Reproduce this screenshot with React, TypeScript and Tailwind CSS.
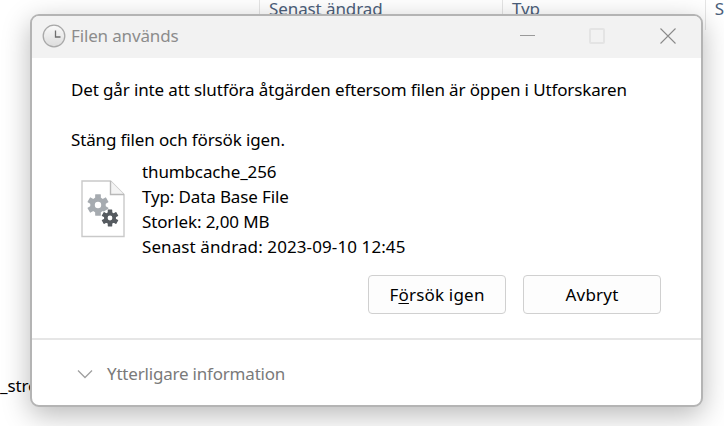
import React from "react";

function ClockIcon() {
  return (
    <svg width="24" height="24" viewBox="0 0 24 24" className="shrink-0">
      <defs>
        <linearGradient id="clockFace" x1="0" y1="0" x2="0" y2="1">
          <stop offset="0" stopColor="#fafafa" />
          <stop offset="1" stopColor="#dcdcdc" />
        </linearGradient>
      </defs>
      <circle cx="12" cy="12" r="10.8" fill="url(#clockFace)" stroke="#a8a8a8" strokeWidth="1.3" />
      <path d="M13.5 6.5V13H18.5" fill="none" stroke="#6e6e6e" strokeWidth="1.3" />
    </svg>
  );
}

const gear = (cx: number, cy: number, r: number) => {
  const teeth = [];
  for (let i = 0; i < 6; i++) {
    teeth.push(
      <rect
        key={i}
        x={cx - r * 0.3}
        y={cy - r * 1.12}
        width={r * 0.6}
        height={r * 0.6}
        rx="0.4"
        transform={`rotate(${i * 60} ${cx} ${cy})`}
      />
    );
  }
  return teeth;
};

function FileIcon() {
  return (
    <svg width="44" height="58" viewBox="0 0 44 58" className="shrink-0">
      <path d="M1 1H29.5L43 14.5V56.5H1Z" fill="#ffffff" stroke="#c9c9c9" strokeWidth="1.4" />
      <path d="M29.5 1V14.5H43" fill="#f4f4f4" stroke="#b9b9b9" strokeWidth="1.4" />
      <g fill="#a6abb0">
        {gear(17, 25, 9.5)}
        <circle cx="17" cy="25" r="7.8" />
      </g>
      <circle cx="17" cy="25" r="3.2" fill="#ffffff" />
      <circle cx="29" cy="38" r="9" fill="#ffffff" />
      <g fill="#565b60">
        {gear(29, 38, 7.5)}
        <circle cx="29" cy="38" r="6" />
      </g>
      <circle cx="29" cy="38" r="2.4" fill="#ffffff" />
    </svg>
  );
}

export default function App() {
  return (
    <div
      className="relative h-[426px] w-[724px] overflow-hidden bg-white text-[#000000]"
      style={{ fontFamily: '"Noto Sans", "Open Sans", sans-serif' }}
    >
      {/* Explorer column headers behind the dialog */}
      <div className="flex h-[30px] pl-[259px] text-[17px] leading-[20px] tracking-[-0.1px] text-[#4c607a]">
        <div className="w-[243px] border-l border-[#e5e5e5] pl-[9px]">
          <div className="-mt-[1px]">Senast ändrad</div>
        </div>
        <div className="w-[203px] border-l border-[#e5e5e5] pl-[9px]">
          <div className="-mt-[1px]">Typ</div>
        </div>
        <div className="flex-1 border-l border-[#e5e5e5] pl-[9px]">
          <div className="-mt-[1px]">S</div>
        </div>
      </div>
      <div className="absolute left-0 top-[376px] text-[17px] leading-[20px] tracking-[-0.1px]">_stre</div>

      {/* Dialog */}
      <div className="absolute left-[30px] top-[14px] flex h-[393px] w-[673px] flex-col overflow-hidden rounded-[9px] border-2 border-[#b4b4b4] bg-white shadow-[0_8px_28px_rgba(0,0,0,0.28)]">
        {/* Title bar */}
        <div className="flex h-[42px] shrink-0 items-center bg-[#f2f2f2] pb-[3px] pl-[10px]">
          <ClockIcon />
          <span className="ml-[5px] text-[17px] tracking-[-0.15px] text-[#8c8c8c]">Filen används</span>
          <div className="ml-auto flex items-center pr-[25px]">
            <div className="h-[1px] w-[15px] bg-[#9a9a9a]" />
            <div className="ml-[54px] h-[16px] w-[16px] rounded-[2px] border-2 border-[#e4e4e4]" />
            <svg width="16" height="16" viewBox="0 0 16 16" className="ml-[55px]">
              <path d="M.5.5 15.5 15.5M15.5.5.5 15.5" stroke="#8a8a8a" strokeWidth="1.1" fill="none" />
            </svg>
          </div>
        </div>

        {/* Body */}
        <div className="flex-1 px-[39px] pt-[19px] text-[17px] leading-[25px] tracking-[-0.13px]">
          <p>Det går inte att slutföra åtgärden eftersom filen är öppen i Utforskaren</p>
          <p className="mt-[25px]">Stäng filen och försök igen.</p>
          <div className="mt-[7px] flex items-center">
            <div className="ml-[10px] mr-[17px] flex items-center">
              <FileIcon />
            </div>
            <div>
              <div>thumbcache_256</div>
              <div>Typ: Data Base File</div>
              <div>Storlek: 2,00 MB</div>
              <div className="tracking-[0.1px]">Senast ändrad: 2023-09-10 12:45</div>
            </div>
          </div>
          <div className="mt-[16px] flex justify-end gap-[17px] pr-[1px]">
            <button className="h-[39px] w-[138px] rounded-[4px] border border-[#d0d0d0] bg-[#fdfdfd] text-[17px] tracking-[0.2px]">
              F<span className="underline underline-offset-2">ö</span>rsök igen
            </button>
            <button className="h-[39px] w-[138px] rounded-[4px] border border-[#d0d0d0] bg-[#fdfdfd] text-[17px] tracking-[0.2px]">
              Avbryt
            </button>
          </div>
        </div>

        {/* Footer */}
        <div className="flex h-[67px] shrink-0 items-center border-t-2 border-[#e6e6e6] pl-[45px] pt-[3px]">
          <svg width="16" height="10" viewBox="0 0 16 10" className="shrink-0">
            <path d="M1 1.5 8 8.5 15 1.5" fill="none" stroke="#a0a0a0" strokeWidth="1.3" />
          </svg>
          <span className="ml-[14px] text-[17px] tracking-[-0.2px] text-[#7a7a7a]">Ytterligare information</span>
        </div>
      </div>
    </div>
  );
}
